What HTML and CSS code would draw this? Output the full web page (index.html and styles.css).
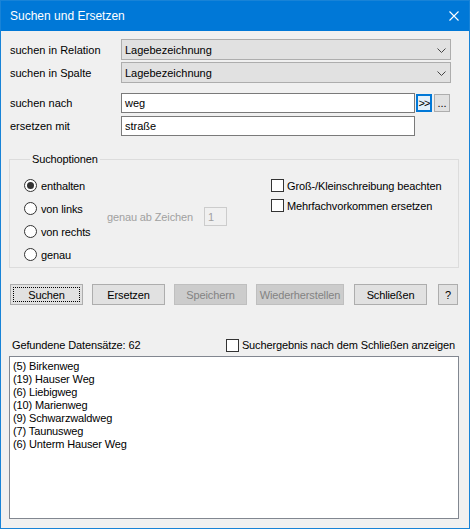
FILE: index.html
```html
<!DOCTYPE html>
<html lang="de">
<head>
<meta charset="utf-8">
<title>Suchen und Ersetzen</title>
<link rel="stylesheet" href="styles.css">
</head>
<body>
<div class="window">
  <div class="titlebar">
    <span class="title">Suchen und Ersetzen</span>
    <svg class="close" width="10" height="10" viewBox="0 0 10 10"><path d="M0.5 0.5 L9.5 9.5 M9.5 0.5 L0.5 9.5" stroke="#fff" stroke-width="1.1" fill="none"/></svg>
  </div>
  <div class="content">
    <div class="form">
      <label class="lbl">suchen in Relation</label>
      <div class="combo"><span>Lagebezeichnung</span><svg class="chev" width="9" height="5" viewBox="0 0 9 5"><path d="M0.5 0.5 L4.5 4.5 L8.5 0.5" stroke="#444" stroke-width="1" fill="none"/></svg></div>
      <label class="lbl">suchen in Spalte</label>
      <div class="combo"><span>Lagebezeichnung</span><svg class="chev" width="9" height="5" viewBox="0 0 9 5"><path d="M0.5 0.5 L4.5 4.5 L8.5 0.5" stroke="#444" stroke-width="1" fill="none"/></svg></div>
      <label class="lbl first-input">suchen nach</label>
      <div class="inputrow first-input">
        <div class="textbox">weg</div>
        <div class="minibtn focus">&gt;&gt;</div>
        <div class="minibtn">...</div>
      </div>
      <label class="lbl">ersetzen mit</label>
      <div class="inputrow">
        <div class="textbox">straße</div>
      </div>
    </div>

    <fieldset class="group">
      <legend>Suchoptionen</legend>
      <div class="opts">
        <div class="radios">
          <div class="radio"><span class="circle checked"></span>enthalten</div>
          <div class="radio"><span class="circle"></span>von links</div>
          <div class="radio"><span class="circle"></span>von rechts</div>
          <div class="radio"><span class="circle"></span>genau</div>
        </div>
        <div class="zeichen">
          <span class="disabled-text">genau ab Zeichen</span>
          <span class="numbox">1</span>
        </div>
        <div class="checks">
          <div class="check"><span class="box"></span>Groß-/Kleinschreibung beachten</div>
          <div class="check"><span class="box"></span>Mehrfachvorkommen ersetzen</div>
        </div>
      </div>
    </fieldset>

    <div class="buttons">
      <div class="btn default w73"><span class="focusrect">Suchen</span></div>
      <div class="btn w73">Ersetzen</div>
      <div class="btn disabled w73">Speichern</div>
      <div class="btn disabled w88">Wiederherstellen</div>
      <div class="btn w73">Schließen</div>
      <div class="btn w20">?</div>
    </div>

    <div class="results-head">
      <span>Gefundene Datensätze: 62</span>
      <div class="check"><span class="box"></span>Suchergebnis nach dem Schließen anzeigen</div>
    </div>
    <div class="listbox">
      <div>(5) Birkenweg</div>
      <div>(19) Hauser Weg</div>
      <div>(6) Liebigweg</div>
      <div>(10) Marienweg</div>
      <div>(9) Schwarzwaldweg</div>
      <div>(7) Taunusweg</div>
      <div>(6) Unterm Hauser Weg</div>
    </div>
  </div>
</div>
</body>
</html>
```
FILE: styles.css
```css
* { box-sizing: border-box; }
html, body { margin: 0; padding: 0; background: #f0f0f0; }
body { font-family: "Liberation Sans", Arial, sans-serif; font-size: 11px; color: #000; letter-spacing: -0.13px; }

.window {
  width: 470px;
  height: 529px;
  border: 1px solid #1883d7;
  background: #f0f0f0;
  display: flex;
  flex-direction: column;
}

.titlebar {
  height: 30px;
  background: #0078d7;
  color: #fff;
  display: flex;
  align-items: center;
  justify-content: space-between;
  padding: 0 10px 1px 9px;
  flex: none;
  letter-spacing: 0;
}
.title { font-size: 12px; }
.close { margin-top: 1px; }

.content {
  padding: 8px 10px 0 8px;
  display: flex;
  flex-direction: column;
}

.form {
  display: grid;
  grid-template-columns: 112px 330px;
  row-gap: 2px;
  align-items: center;
  font-size: 11px;
  letter-spacing: 0;
}
.lbl { padding-left: 1px; }
.first-input { margin-top: 8px; }
.combo {
  height: 21px;
  background: #e1e1e1;
  border: 1px solid #adadad;
  display: flex;
  align-items: center;
  justify-content: space-between;
  padding: 0 4px 0 3px;
}
.chev { margin-top: 1px; }
.inputrow {
  display: flex;
  align-items: center;
  height: 20px;
}
.form .inputrow:last-child { margin-top: 1px; }
.textbox {
  width: 294px;
  height: 20px;
  border: 1px solid #7a7a7a;
  background: #fff;
  padding: 0 3px;
  display: flex;
  align-items: center;
}
.minibtn {
  width: 16px;
  height: 18px;
  border: 1px solid #adadad;
  background: #e1e1e1;
  display: flex;
  align-items: center;
  justify-content: center;
  font-size: 11px;
  margin-left: 2px;
  line-height: 1;
}
.minibtn.focus {
  margin-left: 1px;
  border: 2px solid #0078d7;
  background: #e5f1fb;
  letter-spacing: -1px;
}

.group {
  margin: 17px 0 0 0;
  width: 450px;
  border: 1px solid #dcdcdc;
  padding: 0 0 1px 14px;
  min-width: 0;
}
.group legend {
  padding: 0 2px;
  margin-left: 6px;
  line-height: 13px;
  font-size: 11px;
}
.opts {
  display: flex;
  margin-top: 8px;
}
.radios { width: 83px; display: flex; flex-direction: column; }
.radio {
  height: 23px;
  display: flex;
  align-items: center;
  gap: 4px;
}
.circle {
  width: 13px;
  height: 13px;
  border: 1px solid #333;
  border-radius: 50%;
  background: #fff;
  display: flex;
  align-items: center;
  justify-content: center;
  flex: none;
}
.circle.checked::after {
  content: "";
  width: 7px;
  height: 7px;
  border-radius: 50%;
  background: #333;
}
.zeichen {
  width: 164px;
  display: flex;
  align-items: center;
  gap: 11px;
  margin-top: 8px;
  height: 69px;
}
.disabled-text { color: #a0a0a0; }
.numbox {
  width: 23px;
  height: 19px;
  border: 1px solid #cccccc;
  color: #a0a0a0;
  padding-left: 3px;
  display: flex;
  align-items: center;
}
.checks { display: flex; flex-direction: column; gap: 7px; padding-top: 5px; }
.check {
  display: flex;
  align-items: center;
  gap: 3px;
  height: 13px;
}
.box {
  width: 13px;
  height: 13px;
  border: 1px solid #333;
  background: #fff;
  flex: none;
}

.buttons {
  display: flex;
  margin: 16px 0 0 1px;
  gap: 9px;
}
.btn {
  height: 21px;
  border: 1px solid #adadad;
  background: #e1e1e1;
  display: flex;
  align-items: center;
  justify-content: center;
}
.w73 { width: 73px; }
.w88 { width: 88px; }
.w20 { width: 20px; margin-left: 2px; }
.btn.w88 + .btn { margin-left: 1px; }
.btn.disabled { background: #cccccc; border-color: #bfbfbf; color: #838383; }
.btn.default { padding: 2px; }
.focusrect {
  flex: 1;
  align-self: stretch;
  border: 1px dotted #000;
  display: flex;
  align-items: center;
  justify-content: center;
}

.results-head {
  margin: 33px 0 0 3px;
  display: flex;
  justify-content: space-between;
  align-items: center;
  height: 14px;
  width: 443px;
}
.listbox {
  margin: 4px 0 0 0;
  width: 450px;
  height: 163px;
  border: 1px solid #828790;
  background: #fff;
  padding: 3px 3px;
  line-height: 13px;
}
```
